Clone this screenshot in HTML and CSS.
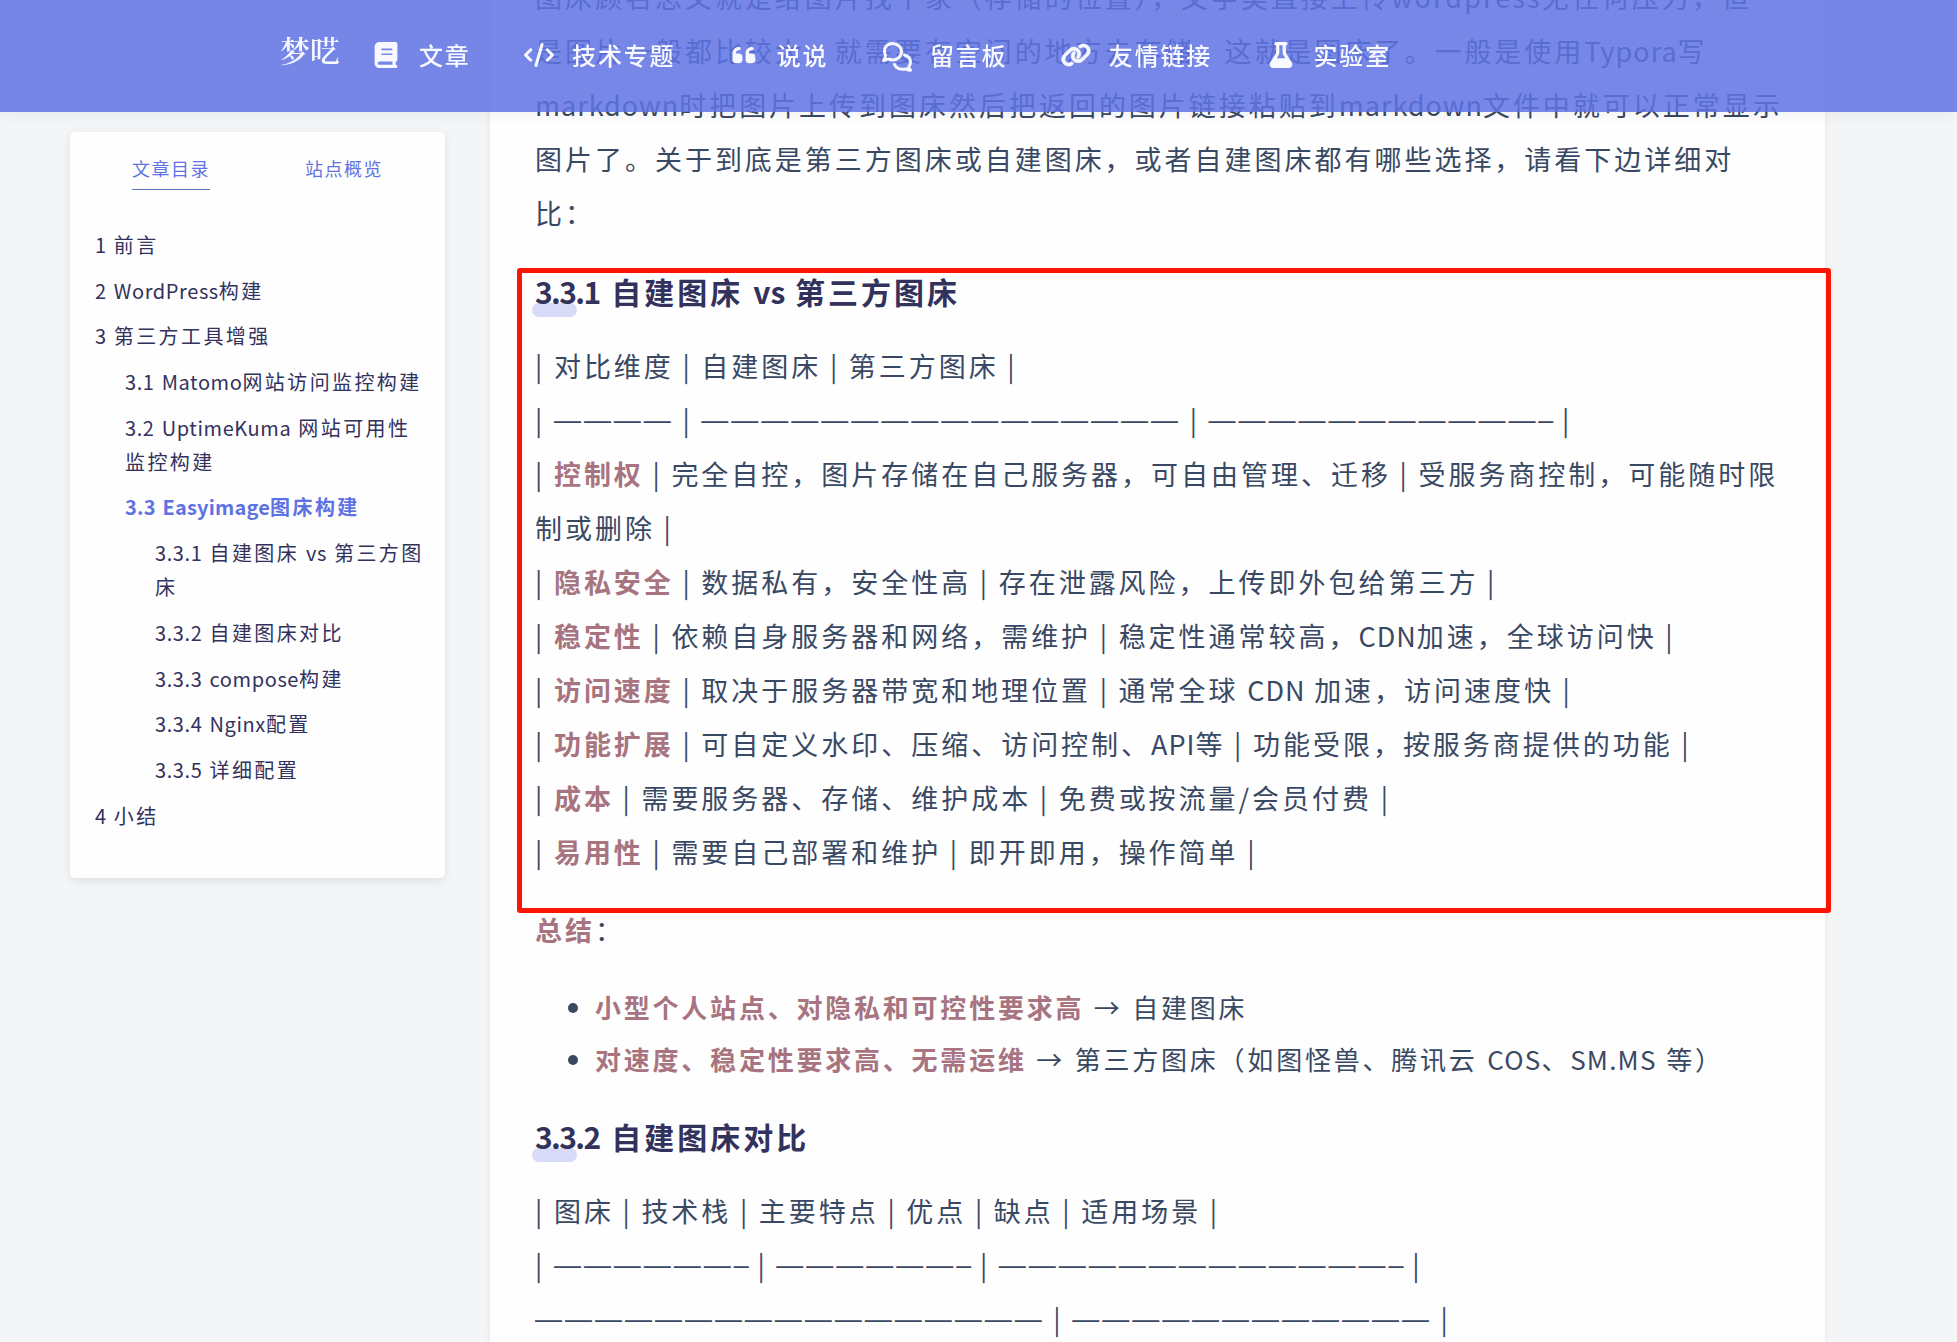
FILE: index.html
```html
<!DOCTYPE html>
<html lang="zh-CN">
<head>
  <meta charset="UTF-8" />
  <title>梦呓 - Easyimage图床构建</title>
  <link rel="stylesheet" href="styles.css">
</head>
<body>
  <header class="navbar">
    <a class="brand">梦呓</a>
    <nav class="menu">
      <a class="menu-item">
        <svg class="icon" viewBox="0 0 448 512"><path d="M96 0C43 0 0 43 0 96L0 416c0 53 43 96 96 96l288 0 32 0c17.700 0 32-14.300 32-32s-14.300-32-32-32l0-64c17.700 0 32-14.300 32-32l0-320c0-17.700-14.300-32-32-32L384 0 96 0zm0 384l256 0 0 64L96 448c-17.700 0-32-14.300-32-32s14.300-32 32-32zm32-240c0-8.800 7.200-16 16-16l192 0c8.800 0 16 7.200 16 16s-7.200 16-16 16l-192 0c-8.800 0-16-7.200-16-16zm16 80l192 0c8.800 0 16 7.200 16 16s-7.200 16-16 16l-192 0c-8.800 0-16-7.200-16-16s7.200-16 16-16z"/></svg>
        <span>文章</span>
      </a>
      <a class="menu-item">
        <svg class="icon" viewBox="0 0 640 512"><path d="M392.800 1.200c-17-4.900-34.700 5-39.600 22l-128 448c-4.900 17 5 34.700 22 39.600s34.700-5 39.600-22l128-448c4.900-17-5-34.700-22-39.600zm80.600 120.100c-12.500 12.500-12.500 32.800 0 45.300L562.700 256l-89.400 89.400c-12.500 12.500-12.500 32.800 0 45.300s32.800 12.500 45.300 0l112-112c12.500-12.500 12.500-32.800 0-45.300l-112-112c-12.500-12.500-32.800-12.500-45.300 0zm-306.700 0c-12.500-12.500-32.800-12.500-45.300 0l-112 112c-12.500 12.500-12.500 32.800 0 45.300l112 112c12.500 12.500 32.800 12.500 45.300 0s12.500-32.800 0-45.300L77.300 256l89.400-89.400c12.500-12.500 12.500-32.800 0-45.300z"/></svg>
        <span>技术专题</span>
      </a>
      <a class="menu-item">
        <svg class="icon" viewBox="0 0 448 512"><path d="M0 216C0 149.700 53.700 96 120 96l8 0c17.700 0 32 14.300 32 32s-14.300 32-32 32l-8 0c-30.900 0-56 25.100-56 56l0 8 64 0c35.300 0 64 28.700 64 64l0 64c0 35.300-28.700 64-64 64l-64 0c-35.300 0-64-28.700-64-64l0-136zm256 0c0-66.300 53.700-120 120-120l8 0c17.700 0 32 14.300 32 32s-14.300 32-32 32l-8 0c-30.900 0-56 25.100-56 56l0 8 64 0c35.300 0 64 28.700 64 64l0 64c0 35.300-28.700 64-64 64l-64 0c-35.300 0-64-28.700-64-64l0-136z"/></svg>
        <span>说说</span>
      </a>
      <a class="menu-item">
        <svg class="icon icon-line" viewBox="0 0 30 30"><path d="M3.500 13.500C.5 6 5 1.500 10.500 1.500c5 0 9 3.500 9 8.200s-4 8.200-9 8.200c-1.800 0-3-.3-4.300-1-1.200.9-2.800 1.500-4.700 1.500 1.300-1.500 2-3 2-4.900zM22.500 13c4 1.200 6 4 6 7 0 2-.7 3.500-1.700 4.600.2 1.500.8 2.500 1.700 3.600-1.800 0-3.300-.5-4.600-1.300-5.400 1.400-10-.6-11.400-4.400"/></svg>
        <span>留言板</span>
      </a>
      <a class="menu-item">
        <svg class="icon icon-link" viewBox="0 0 640 512"><path d="M579.800 267.700c56.500-56.500 56.500-148 0-204.500c-50-50-128.800-56.500-186.300-15.400l-1.600 1.100c-14.400 10.300-17.700 30.300-7.400 44.600s30.300 17.700 44.600 7.400l1.600-1.100c32.100-22.900 76-19.300 103.800 8.600c31.500 31.500 31.500 82.500 0 114L422.300 334.800c-31.500 31.500-82.500 31.500-114 0c-27.900-27.900-31.500-71.800-8.600-103.800l1.100-1.600c10.300-14.400 6.900-34.400-7.400-44.600s-34.400-6.900-44.600 7.400l-1.100 1.600C206.500 251.200 213 330 263 380c56.500 56.500 148 56.500 204.500 0L579.800 267.700zM60.200 244.300c-56.500 56.500-56.500 148 0 204.500c50 50 128.800 56.500 186.300 15.400l1.600-1.100c14.400-10.300 17.700-30.300 7.400-44.600s-30.300-17.700-44.600-7.400l-1.600 1.100c-32.100 22.900-76 19.300-103.800-8.600C74 372 74 321 105.500 289.500L217.700 177.200c31.500-31.500 82.500-31.500 114 0c27.900 27.900 31.500 71.800 8.600 103.900l-1.100 1.600c-10.300 14.400-6.900 34.400 7.400 44.600s34.400 6.900 44.600-7.400l1.100-1.600C433.500 260.800 427 182 377 132c-56.500-56.500-148-56.500-204.500 0L60.200 244.300z"/></svg>
        <span>友情链接</span>
      </a>
      <a class="menu-item">
        <svg class="icon" viewBox="0 0 448 512"><path d="M288 0H160 128C110.300 0 96 14.300 96 32s14.300 32 32 32V196.800c0 11.800-3.300 23.500-9.500 33.500L10.300 406.200C3.600 417.200 0 429.700 0 442.600C0 480.900 31.100 512 69.400 512H378.600c38.300 0 69.400-31.100 69.400-69.400c0-12.800-3.600-25.400-10.300-36.400L329.500 230.400c-6.200-10.100-9.500-21.700-9.500-33.500V64c17.700 0 32-14.300 32-32s-14.300-32-32-32H288zM192 196.800V64h64V196.800c0 23.700 6.600 46.900 19 67.100L309.500 320h-171L173 263.900c12.400-20.200 19-43.400 19-67.100z"/></svg>
        <span>实验室</span>
      </a>
    </nav>
  </header>

  <div class="layout">
    <aside class="sidebar">
      <div class="tabs">
        <a class="tab active">文章目录</a>
        <a class="tab">站点概览</a>
      </div>
      <ul class="toc">
        <li><span class="en">1 </span>前言</li>
        <li><span class="en">2 WordPress</span>构建</li>
        <li><span class="en">3 </span>第三方工具增强</li>
        <li class="level2"><span class="en">3.1 Matomo</span>网站访问监控构建</li>
        <li class="level2"><span class="en">3.2 UptimeKuma </span>网站可用性<br>监控构建</li>
        <li class="level2 current"><span class="en">3.3 Easyimage</span>图床构建</li>
        <li class="level3"><span class="en">3.3.1 </span>自建图床 <span class="en">vs </span>第三方图<br>床</li>
        <li class="level3"><span class="en">3.3.2 </span>自建图床对比</li>
        <li class="level3"><span class="en">3.3.3 compose</span>构建</li>
        <li class="level3"><span class="en">3.3.4 Nginx</span>配置</li>
        <li class="level3"><span class="en">3.3.5 </span>详细配置</li>
        <li><span class="en">4 </span>小结</li>
      </ul>
    </aside>

    <main class="article">
      <p>图床顾名思义就是给图片找个家（存储的位置），文字类直接上传<span class="en wide">wordpress</span>无任何压力，但<br>
      是图片一般都比较大，就需要有空间的地方去存储，这就是图床了。一般是使用<span class="en">Typora</span>写<br>
      <span class="en">markdown</span>时把图片上传到图床然后把返回的图片链接粘贴到<span class="en">markdown</span>文件中就可以正常显示<br>
      图片了。关于到底是第三方图床或自建图床，或者自建图床都有哪些选择，请看下边详细对<br>
      比：</p>

      <h5><span class="en">3.3.1 </span>自建图床 <span class="vs">vs</span> 第三方图床</h5>
      <p>| 对比维度 | 自建图床 | 第三方图床 |<br>
      | <span class="dash">————</span> | <span class="dash">————————————————</span> | <span class="dash">———————————<span class="end">–</span></span> |<br>
      | <strong>控制权</strong> | 完全自控，图片存储在自己服务器，可自由管理、迁移 | 受服务商控制，可能随时限<br>
      制或删除 |<br>
      | <strong>隐私安全</strong> | 数据私有，安全性高 | 存在泄露风险，上传即外包给第三方 |<br>
      | <strong>稳定性</strong> | 依赖自身服务器和网络，需维护 | 稳定性通常较高，<span class="en">CDN</span>加速，全球访问快 |<br>
      | <strong>访问速度</strong> | 取决于服务器带宽和地理位置 | 通常全球 <span class="en">CDN</span> 加速，访问速度快 |<br>
      | <strong>功能扩展</strong> | 可自定义水印、压缩、访问控制、<span class="en">API</span>等 | 功能受限，按服务商提供的功能 |<br>
      | <strong>成本</strong> | 需要服务器、存储、维护成本 | 免费或按流量/会员付费 |<br>
      | <strong>易用性</strong> | 需要自己部署和维护 | 即开即用，操作简单 |</p>

      <p><strong>总结</strong>：</p>
      <ul class="list">
        <li><strong>小型个人站点、对隐私和可控性要求高</strong> → 自建图床</li>
        <li><strong>对速度、稳定性要求高、无需运维</strong> → 第三方图床（如图怪兽、腾讯云 <span class="en">COS</span>、<span class="en">SM.MS</span> 等）</li>
      </ul>

      <h5><span class="en">3.3.2 </span>自建图床对比</h5>
      <p>| 图床 | 技术栈 | 主要特点 | 优点 | 缺点 | 适用场景 |<br>
      | <span class="dash">——————<span class="end">–</span></span> | <span class="dash">——————<span class="end">–</span></span> | <span class="dash">—————————————<span class="end">–</span></span> |<br>
      <span class="dash">—————————————————</span> | <span class="dash">————————————</span> |</p>
    </main>
  </div>

  <div class="highlight"></div>
</body>
</html>
```
FILE: styles.css
```css
* { box-sizing: border-box; }
body {
  margin: 0; height: 1342px; overflow: hidden; background: #f4f5f7; color: #3a4963;
  font-family: "Noto Sans CJK SC", sans-serif;
}

/* navbar */
.navbar {
  position: fixed; top: 0; left: 0; right: 0; z-index: 10; height: 112px;
  display: flex; align-items: center; padding: 0 0 2px 280px;
  background: rgba(94, 114, 228, 0.85); color: #f8f9ff;
  box-shadow: 0 2px 14px rgba(0,0,0,0.06);
}
.brand {
  width: 91px; padding-bottom: 12px; font-family: "Noto Serif CJK SC", "Noto Sans CJK SC", serif;
  font-size: 30px; line-height: 40px; font-weight: 600; white-space: nowrap;
}
.menu { display: flex; gap: 53.5px; }
.menu-item {
  display: flex; align-items: center; gap: 18px; white-space: nowrap;
  font-size: 24px; line-height: 40px; letter-spacing: 1.8px; font-weight: 500;
}
.icon { width: 30px; height: 26px; fill: currentColor; }
.icon-line {
  height: 30px; margin-top: 3px; fill: none; stroke: currentColor; stroke-width: 3;
  stroke-linejoin: round; stroke-linecap: round;
}
.icon-link { stroke: currentColor; stroke-width: 18; overflow: visible; }

.layout { display: flex; align-items: flex-start; padding-left: 70px; }

/* sidebar */
.sidebar {
  width: 375px; height: 746px; margin: 132px 45px 0 0; padding: 21px 25px 0; flex: none;
  background: #fefefe; border-radius: 5px; box-shadow: 0 3px 10px rgba(0,0,0,0.09);
}
.tabs { display: flex; padding-left: 37px; gap: 95px; color: #5e72e4; }
.tab { height: 37px; line-height: 31px; font-size: 18px; letter-spacing: 1.5px; white-space: nowrap; }
.tab.active { border-bottom: 1px solid #5e72c4; }
.toc {
  list-style: none; margin: 38px 0 0; padding: 0; color: #32325d;
  font-size: 20px; line-height: 34px; letter-spacing: 2.4px; white-space: nowrap;
}
.toc li { margin-bottom: 11.7px; }
.toc .en { letter-spacing: 0.6px; word-spacing: 2px; }
.toc .level2 { padding-left: 30px; }
.toc .level3 { padding-left: 60px; }
.toc .current { color: #5e72e4; font-weight: 700; }
.toc .current .en { letter-spacing: 0.2px; }

/* article */
.article {
  width: 1335px; height: 1372px; margin-top: -30px; padding-left: 45px; flex: none;
  background: #fefefe; box-shadow: 0 0 8px rgba(0,0,0,0.06); white-space: nowrap;
}
.article p {
  margin: 0 0 24px; font-size: 27px; line-height: 54px;
  letter-spacing: 2.98px; word-spacing: -0.4px;
}
.article p .en { letter-spacing: 1px; }
.article p .wide { letter-spacing: 2.1px; }
.article strong { color: #a7747f; font-weight: 700; }
.article h5 {
  position: relative; z-index: 0; margin: 32px 0 29px; color: #32325d;
  font-size: 30px; line-height: 38px; letter-spacing: 3px; font-weight: 700;
}
.article h5 .en { letter-spacing: -1.6px; word-spacing: 6.5px; }
.article h5 .vs { letter-spacing: 0; }
.article h5::before {
  content: ""; position: absolute; z-index: -1; left: -3px; bottom: -7px;
  width: 45px; height: 14px; border-radius: 7px; background: #d8dbf8;
}
.dash { font-family: "Liberation Sans", sans-serif; line-height: 1; vertical-align: 2px; }
.dash .end { letter-spacing: 0; }
.list {
  margin: 0; padding-left: 60px; font-size: 26px; line-height: 52.2px;
  letter-spacing: 2.78px; word-spacing: 1px;
}
.list .en { letter-spacing: 1.2px; }

/* red frame over the comparison section */
.highlight {
  position: absolute; left: 517px; top: 267.5px; width: 1314px; height: 645px;
  border: 5px solid #fb1504; border-radius: 3px;
}
```
